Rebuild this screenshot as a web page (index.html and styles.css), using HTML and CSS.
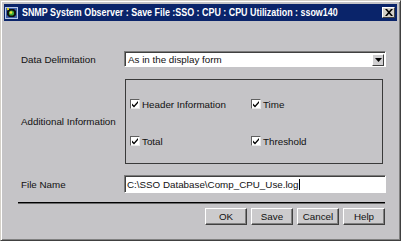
FILE: index.html
```html
<!DOCTYPE html>
<html>
<head>
<meta charset="utf-8">
<link rel="stylesheet" href="styles.css">
</head>
<body>
<div class="window">
  <div class="titlebar">
    <svg class="appicon" width="13" height="12" viewBox="0 0 13 12">
      <rect x="0.5" y="0.5" width="12" height="11" fill="#3d5fa8" stroke="#b8c8e8"/>
      <polygon points="4,2 9,2 11,4 11,8 9,10 4,10 2,8 2,4" fill="#101010"/>
      <circle cx="6.5" cy="6" r="2.6" fill="#3fae3a"/>
      <circle cx="6" cy="5.5" r="1.3" fill="#f2e23a"/>
      <rect x="2" y="1" width="2" height="2" fill="#d8d020"/>
    </svg>
    <span class="title-wrap"><span class="title">SNMP System Observer : Save File :SSO : CPU : CPU Utilization : ssow140</span></span>
    <div class="close">
      <svg width="8" height="7" viewBox="0 0 8 7"><path d="M0 0h2l2 2.2L6 0h2L5 3.5 8 7H6L4 4.8 2 7H0l3-3.5z" fill="#000"/></svg>
    </div>
  </div>
  <div class="content">
    <div class="row row-delim">
      <span class="lbl">Data Delimitation</span>
      <div class="combo">
        <span class="field-text">As in the display form</span>
        <span class="combo-btn"><svg width="7" height="4" viewBox="0 0 7 4"><path d="M0 0h7L3.5 4z" fill="#000"/></svg></span>
      </div>
    </div>
    <div class="row row-info">
      <span class="lbl">Additional Information</span>
      <div class="group">
        <div class="check"><span class="box"><svg width="8" height="8" viewBox="0 0 8 8"><path d="M1 3.5l2 2 4-4.5v2L3 7.5l-2-2z" fill="#000"/></svg></span>Header Information</div>
        <div class="check"><span class="box"><svg width="8" height="8" viewBox="0 0 8 8"><path d="M1 3.5l2 2 4-4.5v2L3 7.5l-2-2z" fill="#000"/></svg></span>Time</div>
        <div class="check"><span class="box"><svg width="8" height="8" viewBox="0 0 8 8"><path d="M1 3.5l2 2 4-4.5v2L3 7.5l-2-2z" fill="#000"/></svg></span>Total</div>
        <div class="check"><span class="box"><svg width="8" height="8" viewBox="0 0 8 8"><path d="M1 3.5l2 2 4-4.5v2L3 7.5l-2-2z" fill="#000"/></svg></span>Threshold</div>
      </div>
    </div>
    <div class="row row-file">
      <span class="lbl">File Name</span>
      <div class="textfield"><span class="field-text">C:\SSO Database\Comp_CPU_Use.log</span><span class="caret"></span></div>
    </div>
    <div class="sep"></div>
    <div class="buttons">
      <div class="btn">OK</div>
      <div class="btn">Save</div>
      <div class="btn">Cancel</div>
      <div class="btn">Help</div>
    </div>
  </div>
</div>
</body>
</html>
```

FILE: styles.css
```css
html, body {
  margin: 0;
  padding: 0;
  background: #ffffff;
}
body {
  width: 404px;
  height: 244px;
  overflow: hidden;
  font-family: "Liberation Sans", Arial, sans-serif;
  font-size: 9.8px;
  color: #111;
}
.window {
  box-sizing: border-box;
  width: 401px;
  height: 241px;
  background: #c5c4c7;
  border-top: 1px solid #d4d0c8;
  border-left: 1px solid #d4d0c8;
  border-right: 1px solid #404040;
  border-bottom: 1px solid #404040;
  box-shadow: inset 1px 1px 0 #ffffff, inset -1px -1px 0 #808080;
  padding: 3px;
  display: flex;
  flex-direction: column;
}
.titlebar {
  height: 17px;
  background: #0a246a;
  display: flex;
  align-items: center;
  padding: 0 2px 0 1px;
  color: #fff;
}
.appicon {
  flex: none;
  margin-right: 4px;
}
.title-wrap {
  flex: 1;
  overflow: hidden;
  white-space: nowrap;
}
.title {
  display: inline-block;
  font-family: "Liberation Sans", Arial, sans-serif;
  font-weight: bold;
  font-size: 10.3px;
  white-space: nowrap;
  transform: scaleX(0.865);
  transform-origin: left center;
}
.close {
  flex: none;
  box-sizing: border-box;
  width: 13px;
  height: 11px;
  background: #d4d0c8;
  border-top: 1px solid #fff;
  border-left: 1px solid #fff;
  border-right: 1px solid #404040;
  border-bottom: 1px solid #404040;
  display: flex;
  align-items: center;
  justify-content: center;
}
.content {
  padding: 30px 12px 0 14px;
  display: flex;
  flex-direction: column;
}
.row {
  display: grid;
  grid-template-columns: 106px 262px;
  align-items: center;
}
.lbl {
  padding-left: 3px;
  white-space: nowrap;
}
.row-info {
  margin-top: 12px;
}
.row-file {
  margin-top: 11px;
}
.combo, .textfield {
  box-sizing: border-box;
  background: #fff;
  border-top: 1px solid #7c7c7c;
  border-left: 1px solid #7c7c7c;
  border-right: 1px solid #fff;
  border-bottom: 1px solid #fff;
  box-shadow: inset 1px 1px 0 #404040;
  display: flex;
  align-items: center;
}
.combo {
  height: 16px;
  padding: 0 1px 0 2px;
}
.textfield {
  height: 18px;
  padding: 0 1px 0 1px;
}
.field-text {
  flex: 1;
  white-space: nowrap;
  padding-left: 1px;
}
.textfield .field-text {
  flex: none;
}
.caret {
  width: 1px;
  height: 11px;
  background: #000;
}
.combo-btn {
  flex: none;
  box-sizing: border-box;
  width: 12px;
  height: 12px;
  margin-top: 1px;
  background: #d0cfd1;
  border-top: 1px solid #fff;
  border-left: 1px solid #fff;
  border-right: 1px solid #404040;
  border-bottom: 1px solid #404040;
  display: flex;
  align-items: center;
  justify-content: center;
}
.group {
  box-sizing: border-box;
  height: 85px;
  margin: 0 3px 0 1px;
  border: 1px solid #3a3a3a;
  padding: 17px 4px 15px 4px;
  display: grid;
  grid-template-columns: 121px 1fr;
  grid-template-rows: 14px 14px;
  row-gap: 23px;
}
.check {
  display: flex;
  align-items: center;
  white-space: nowrap;
}
.box {
  box-sizing: border-box;
  width: 10px;
  height: 10px;
  background: #fff;
  border-top: 1px solid #606060;
  border-left: 1px solid #606060;
  border-right: 1px solid #e8e8e8;
  border-bottom: 1px solid #e8e8e8;
  display: flex;
  align-items: center;
  justify-content: center;
  margin-right: 2px;
}
.sep {
  margin-top: 9px;
  height: 1px;
  background: #000;
  border-bottom: 1px solid #6a6a6a;
}
.buttons {
  margin-top: 4px;
  display: flex;
  justify-content: flex-end;
  gap: 4px;
}
.btn {
  box-sizing: border-box;
  width: 42px;
  height: 17px;
  background: #cccbcd;
  border-top: 1px solid #fff;
  border-left: 1px solid #fff;
  border-right: 1px solid #404040;
  border-bottom: 1px solid #404040;
  box-shadow: inset -1px -1px 0 #808080;
  display: flex;
  align-items: center;
  justify-content: center;
}
```
